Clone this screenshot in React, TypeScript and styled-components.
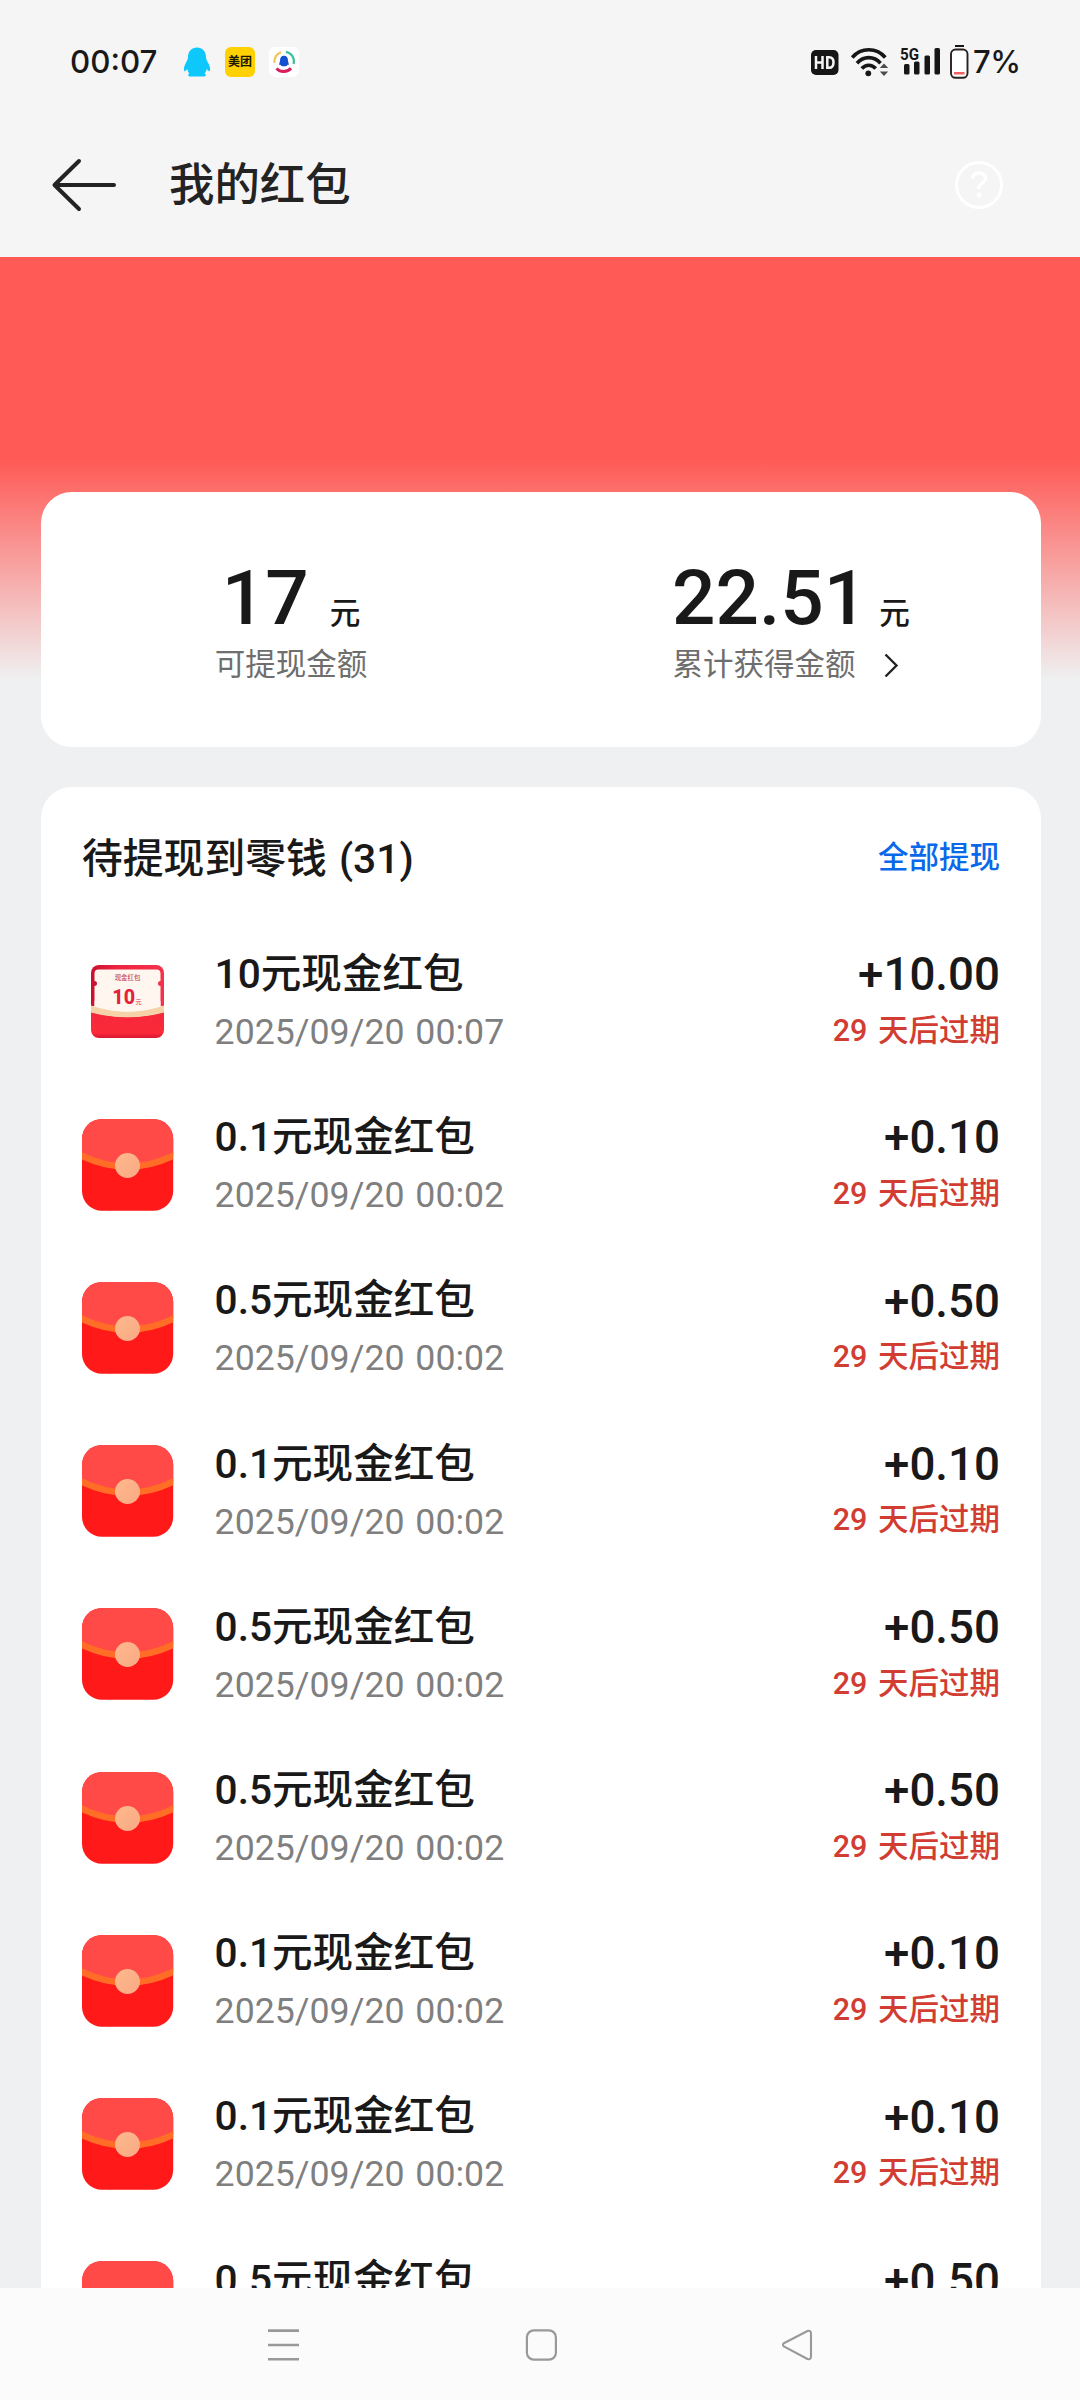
import React from "react";
import styled, { createGlobalStyle } from "styled-components";

const GlobalStyle = createGlobalStyle`
  * { box-sizing: border-box; }
  html, body { margin: 0; padding: 0; background: #eff0f2; }
  body { font-family: Roboto, "Noto Sans CJK SC", sans-serif; color: #191919; }
`;

const Screen = styled.div`
  width: 1080px;
  height: 2400px;
  display: flex;
  flex-direction: column;
  overflow: hidden;
  background: #eff0f2;
`;

const StatusBar = styled.div`
  flex: none;
  height: 124px;
  display: flex;
  align-items: center;
  justify-content: space-between;
  padding: 0 60px 0 70px;
  background: #f5f5f5;
`;

const StatusGroup = styled.div<{ $gap: number }>`
  display: flex;
  align-items: center;
  gap: ${(p) => p.$gap}px;
  svg { display: block; flex: none; overflow: visible; }
`;

const Clock = styled.span`
  width: 99px;
  font: 500 31.3px/36px Inter, sans-serif;
`;

const BatteryLevel = styled.span`
  width: 47px;
  margin-left: -6px;
  font: 500 31px/36px Inter, sans-serif;
  letter-spacing: -0.4px;
  white-space: nowrap;
`;

const Header = styled.header`
  flex: none;
  height: 133px;
  display: flex;
  align-items: center;
  padding: 0 76px 11px 51px;
  background: #f5f5f5;
  svg { display: block; flex: none; }
`;

const PageTitle = styled.h1`
  flex: 1;
  margin: 2px 0 0 52px;
  font-size: 45.4px;
  line-height: 60px;
  font-weight: 500;
  color: #232323;
`;

const Content = styled.main`
  flex: 1;
  min-height: 0;
  overflow: hidden;
  display: flex;
  flex-direction: column;
  gap: 40px;
  padding: 235px 39px 0 41px;
  background: linear-gradient(#ff5a56 0, #ff5a56 203px, #eff0f1 422px, #eff0f2 100%);
`;

const BalanceCard = styled.section`
  flex: none;
  height: 255px;
  display: grid;
  grid-template-columns: 1fr 1fr;
  padding-top: 61px;
  border-radius: 31px;
  background: #fff;
`;

const Balance = styled.div`
  display: flex;
  flex-direction: column;
  align-items: center;
`;

const BalanceValue = styled.div`
  display: flex;
  align-items: baseline;
  height: 90px;
  font-size: 76.5px;
  line-height: 90px;
  font-weight: 500;
`;

const Unit = styled.span<{ $gap: number }>`
  margin-left: ${(p) => p.$gap}px;
  font-size: 30.6px;
  font-weight: 500;
`;

const BalanceLabel = styled.div<{ $trail?: boolean }>`
  display: flex;
  align-items: center;
  margin-top: 4px;
  padding-right: ${(p) => (p.$trail ? 11 : 0)}px;
  font-size: 30.5px;
  line-height: 36px;
  font-weight: 400;
  color: #6e6e6e;
  svg { display: block; margin: 1px 0 0 27px; }
`;

const ListCard = styled.section`
  flex: 1;
  min-height: 0;
  overflow: hidden;
  padding: 48px 41px 0;
  border-radius: 31px 31px 0 0;
  background: #fff;
`;

const ListHead = styled.div`
  display: flex;
  align-items: center;
  justify-content: space-between;
  height: 48px;
  margin-bottom: 37px;
`;

const ListTitle = styled.h2`
  margin: 0;
  font-size: 40.8px;
  line-height: 48px;
  font-weight: 500;
  word-spacing: 2px;
`;

const WithdrawAll = styled.span`
  font-size: 30.5px;
  line-height: 36px;
  font-weight: 500;
  color: #0a68ea;
  margin-bottom: 2px;
`;

const Row = styled.div`
  height: 163.2px;
  display: flex;
  align-items: center;
  svg { display: block; flex: none; }
`;

const RowMain = styled.div`
  flex: 1;
  margin-left: 40.6px;
`;

const RowTitle = styled.div`
  font-size: 40.6px;
  line-height: 48px;
  font-weight: 500;
`;

const RowDate = styled.div`
  margin-top: 13px;
  font-size: 35.7px;
  line-height: 42px;
  word-spacing: 2px;
  color: #7f7f7f;
`;

const RowSide = styled.div`
  padding-bottom: 6px;
  text-align: right;
`;

const Amount = styled.div`
  font-size: 45.7px;
  line-height: 54px;
  font-weight: 500;
`;

const Expiry = styled.div`
  margin-top: 10.6px;
  font-size: 30.5px;
  line-height: 36px;
  font-weight: 500;
  word-spacing: 3px;
  color: #d23d33;
`;

const NavBar = styled.nav`
  flex: none;
  height: 112px;
  display: flex;
  align-items: center;
  gap: 225px;
  padding: 1px 0 0 267px;
  background: #fbfbfb;
  svg { display: block; flex: none; }
`;

const QQIcon = () => (
  <svg width="28" height="30" viewBox="0 0 28 30">
    <path
      d="M14 .5C8.600.5 5 4.500 5 10c0 2-.8 3.600-2.200 6C1.200 19 .4 22 1.200 24c.5 1 2-.5 3-2 .5 2 1.300 3.500 2.300 4.500C4.500 27.200 4.500 29.500 8 29.500h12c3.500 0 3.500-2.300 1.500-3 1-1 1.800-2.500 2.300-4.500 1 1.500 2.500 3 3 2 .8-2 0-5-1.600-8C23.800 13.600 23 12 23 10 23 4.500 19.400.5 14 .5z"
      fill="#0fc8fb"
    />
  </svg>
);

const MeituanIcon = () => (
  <svg width="30" height="30" viewBox="0 0 30 30">
    <rect width="30" height="30" rx="6" fill="#ffd100" />
    <text x="15" y="19.300" textAnchor="middle" fontSize="12" fontWeight="700" fill="#1b1600" fontFamily="Noto Sans CJK SC, sans-serif">美团</text>
  </svg>
);

const BrowserIcon = () => (
  <svg width="30" height="30" viewBox="0 0 30 30">
    <rect width="30" height="30" rx="6" fill="#fff" />
    <g fill="none" strokeWidth="2.200">
      <path d="M5.500 16A9.800 9.800 0 0 1 12 5.200" stroke="#f2c45c" />
      <path d="M17 4.800A9.800 9.800 0 0 1 24.600 17" stroke="#3fbf9b" />
      <path d="M7.500 21.500A9.800 9.800 0 0 0 22 21.200" stroke="#d81e5b" strokeWidth="3" />
    </g>
    <path d="M15 8.800c-2.600 0-3.900 1.900-3.900 4.200 0 1.700-1 2.900-.8 4.900l1.200-.2c.3 1.200 1.500 1.600 3.500 1.600s3.200-.4 3.500-1.600l1.200.2c.2-2-.8-3.200-.8-4.900 0-2.300-1.300-4.200-3.900-4.200z" fill="#1450d2" />
  </svg>
);

const HdIcon = () => (
  <svg width="30" height="27" viewBox="0 -1 30 27">
    <rect width="27.500" height="25" rx="5" fill="#161616" />
    <path d="M5 6v13M11.500 6v13M5 12.500h6.500" stroke="#f5f5f5" strokeWidth="2.500" fill="none" />
    <path d="M16.300 7.200h1.900c3.300 0 4.300 2 4.300 5.300s-1 5.300-4.300 5.300h-1.900z" stroke="#f5f5f5" strokeWidth="2.500" fill="none" />
  </svg>
);

const WifiIcon = () => (
  <svg width="38" height="30" viewBox="0 0 38 30">
    <g fill="none" stroke="#161616" strokeWidth="3.600">
      <path d="M1.200 10.500C10 .2 25.500.2 34.300 10.500" />
      <path d="M6 16.200c6.500-7.400 17-7.400 23.500 0" />
      <path d="M10.800 21.500c4-4.400 9.900-4.400 13.900 0" />
    </g>
    <circle cx="17.300" cy="26.300" r="2.900" fill="#161616" />
    <path d="M28.800 21l4.200-4.500 4.200 4.500zM28.800 24.500h8.400L33 29z" fill="#4c4c4c" />
  </svg>
);

const SignalIcon = () => (
  <svg width="41" height="34" viewBox="0 -2 41 34">
    <text x="1" y="12.800" fontSize="17" fontWeight="700" fill="#161616" textLength="19" lengthAdjust="spacingAndGlyphs" fontFamily="Roboto, sans-serif">5G</text>
    <g fill="#161616">
      <rect x="5" y="17" width="5.500" height="10.500" rx="1.500" />
      <rect x="15" y="14.500" width="5.500" height="13" rx="1.500" />
      <rect x="25.500" y="8.500" width="5.500" height="19" rx="1.500" />
      <rect x="35.500" y="1" width="5.500" height="26.500" rx="1.500" />
    </g>
  </svg>
);

const BatteryIcon = () => (
  <svg width="19" height="34" viewBox="0 0 19 34">
    <rect x="5" y="0" width="9" height="2" fill="#161616" />
    <rect x="1" y="4.500" width="16.500" height="28.300" rx="4.500" fill="#fff" stroke="#2a2020" strokeWidth="1.900" />
    <rect x="4" y="27" width="10.500" height="2.500" fill="#f4605f" />
  </svg>
);

const BackIcon = () => (
  <svg width="66" height="54" viewBox="0 0 66 54">
    <path d="M28 3L3.500 27 28 51M4.500 27H63" fill="none" stroke="#232323" strokeWidth="4" strokeLinecap="round" strokeLinejoin="round" />
  </svg>
);

const HelpIcon = () => (
  <svg width="50" height="50" viewBox="0 0 50 50">
    <circle cx="25" cy="25" r="22.500" fill="none" stroke="#fff" strokeWidth="3" />
    <path d="M18.500 18.500c.3-3.800 3-5.500 6.500-5.500s6.500 2.200 6.500 5.500c0 4-5.500 5-6.500 8.500v2" fill="none" stroke="#fff" strokeWidth="3.400" />
    <circle cx="25" cy="35" r="2.500" fill="#fff" />
  </svg>
);

const ChevronIcon = () => (
  <svg width="16" height="25" viewBox="0 0 16 25">
    <path d="M2.500 1.500l11 11-11 11" fill="none" stroke="#222" strokeWidth="2.400" />
  </svg>
);

const EnvelopeIcon = ({ id }: { id: string }) => (
  <svg width="92" height="92" viewBox="0 0 92 92">
    <defs>
      <clipPath id={`env-${id}`}>
        <rect width="91.200" height="91.800" rx="20" />
      </clipPath>
      <linearGradient id={`seal-${id}`} x1="0" y1="0" x2="1" y2="1">
        <stop offset="0" stopColor="#ffb98c" />
        <stop offset="1" stopColor="#f8a984" />
      </linearGradient>
    </defs>
    <g clipPath={`url(#env-${id})`}>
      <rect width="92" height="92" fill="#ff1918" />
      <path d="M0 0h92v36.500Q45.500 59 0 36.500z" fill="#ff4a48" />
      <path d="M-2 36Q45.500 59.500 93 36" fill="none" stroke="#ff6d26" strokeWidth="6.500" />
      <circle cx="45.500" cy="46.500" r="12.500" fill={`url(#seal-${id})`} />
    </g>
  </svg>
);

const CouponIcon = () => (
  <svg width="92" height="92" viewBox="0 0 92 92">
    <defs>
      <linearGradient id="cpBack" x1="0" y1="0" x2="1" y2="0">
        <stop offset="0" stopColor="#c8102e" />
        <stop offset=".35" stopColor="#ee2440" />
        <stop offset="1" stopColor="#f5324c" />
      </linearGradient>
      <linearGradient id="cpFront" x1="0" y1="0" x2="0" y2="1">
        <stop offset="0" stopColor="#f6283a" />
        <stop offset=".8" stopColor="#fb2a3b" />
        <stop offset="1" stopColor="#d91730" />
      </linearGradient>
    </defs>
    <path d="M9 50V17a8 8 0 0 1 8-8h57a8 8 0 0 1 8 8v33z" fill="url(#cpBack)" />
    <path d="M16.500 13.500h58a4 4 0 0 1 4 4v7.500a2.500 2.500 0 0 0 0 5V56h-66V30a2.500 2.500 0 0 0 0-5v-7.500a4 4 0 0 1 4-4z" fill="#fff6f0" />
    <path d="M9 56Q45.500 66 82 56v18a8 8 0 0 1-8 8H17a8 8 0 0 1-8-8z" fill="url(#cpFront)" />
    <path d="M9 49.500Q45.500 62 82 49.500v7Q45.500 66 9 56.500z" fill="#f6d2a8" />
    <path d="M12.500 45h66v5Q45.500 61 12.500 50z" fill="#fff6f0" />
    <text x="45.500" y="23.800" textAnchor="middle" fontSize="6.400" fontWeight="500" fill="#c84a58" fontFamily="Noto Sans CJK SC, sans-serif">现金红包</text>
    <text x="30.300" y="48.300" fontSize="19.700" fontWeight="800" fill="#e3213b" fontFamily="Roboto, sans-serif">10</text>
    <text x="53.500" y="47.500" fontSize="6" fill="#e3213b" fontFamily="Noto Sans CJK SC, sans-serif">元</text>
  </svg>
);

const MenuIcon = () => (
  <svg width="32" height="32" viewBox="0 0 32 32">
    <path d="M1 1.600h31M1 16h31M1 30.300h31" stroke="#999" strokeWidth="2.600" />
  </svg>
);

const HomeIcon = () => (
  <svg width="33" height="32" viewBox="0 0 33 32">
    <rect x="2.900" y="1.300" width="29" height="29.400" rx="7" fill="none" stroke="#999" strokeWidth="2.200" />
  </svg>
);

const TriangleIcon = () => (
  <svg width="32" height="32" viewBox="0 0 32 32">
    <path d="M25.500 2L1.800 14.200q-1.800 1.500 0 3.200L25.500 30q3.300 1 3.500-2.200V4.200Q28.800 1 25.500 2z" fill="none" stroke="#999" strokeWidth="2.100" strokeLinejoin="round" />
  </svg>
);

type Packet = { value: string; time: string; coupon?: boolean };

const packets: Packet[] = [
  { value: "10", time: "00:07", coupon: true },
  { value: "0.1", time: "00:02" },
  { value: "0.5", time: "00:02" },
  { value: "0.1", time: "00:02" },
  { value: "0.5", time: "00:02" },
  { value: "0.5", time: "00:02" },
  { value: "0.1", time: "00:02" },
  { value: "0.1", time: "00:02" },
  { value: "0.5", time: "00:02" },
];

const PacketRow = ({ packet, id }: { packet: Packet; id: string }) => (
  <Row>
    {packet.coupon ? <CouponIcon /> : <EnvelopeIcon id={id} />}
    <RowMain>
      <RowTitle>{packet.value}元现金红包</RowTitle>
      <RowDate>2025/09/20 {packet.time}</RowDate>
    </RowMain>
    <RowSide>
      <Amount>+{Number(packet.value).toFixed(2)}</Amount>
      <Expiry>29 天后过期</Expiry>
    </RowSide>
  </Row>
);

export default function App() {
  return (
    <>
      <GlobalStyle />
      <Screen>
        <StatusBar>
          <StatusGroup $gap={14}>
            <Clock>00:07</Clock>
            <QQIcon />
            <MeituanIcon />
            <BrowserIcon />
          </StatusGroup>
          <StatusGroup $gap={10}>
            <HdIcon />
            <WifiIcon />
            <SignalIcon />
            <BatteryIcon />
            <BatteryLevel>7%</BatteryLevel>
          </StatusGroup>
        </StatusBar>
        <Header>
          <BackIcon />
          <PageTitle>我的红包</PageTitle>
          <HelpIcon />
        </Header>
        <Content>
          <BalanceCard>
            <Balance>
              <BalanceValue>17<Unit $gap={21}>元</Unit></BalanceValue>
              <BalanceLabel>可提现金额</BalanceLabel>
            </Balance>
            <Balance>
              <BalanceValue>22.51<Unit $gap={12}>元</Unit></BalanceValue>
              <BalanceLabel $trail>累计获得金额<ChevronIcon /></BalanceLabel>
            </Balance>
          </BalanceCard>
          <ListCard>
            <ListHead>
              <ListTitle>待提现到零钱 (31)</ListTitle>
              <WithdrawAll>全部提现</WithdrawAll>
            </ListHead>
            {packets.map((p, i) => (
              <PacketRow key={i} id={String(i)} packet={p} />
            ))}
          </ListCard>
        </Content>
        <NavBar>
          <MenuIcon />
          <HomeIcon />
          <TriangleIcon />
        </NavBar>
      </Screen>
    </>
  );
}
